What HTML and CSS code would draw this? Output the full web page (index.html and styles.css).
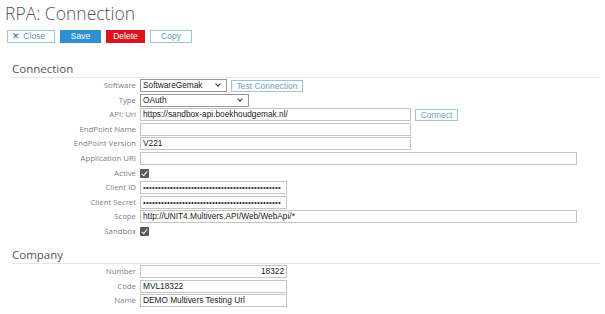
FILE: index.html
```html
<!DOCTYPE html>
<html lang="en">
<head>
  <meta charset="UTF-8">
  <title>RPA: Connection</title>
  <link rel="stylesheet" href="styles.css">
</head>
<body>
  <h1>RPA: Connection</h1>

  <div class="toolbar">
    <button class="btn btn-close"><span class="x">&#x2715;</span> Close</button>
    <button class="btn btn-save">Save</button>
    <button class="btn btn-delete">Delete</button>
    <button class="btn btn-copy">Copy</button>
  </div>

  <div class="section first">
    <h2>Connection</h2>
    <div class="form">
      <label>Software</label>
      <div class="field">
        <div class="select w-sw">SoftwareGemak<span class="caret"></span></div>
        <button class="btn btn-light w-test">Test Connection</button>
      </div>

      <label>Type</label>
      <div class="field"><div class="select w-type">OAuth<span class="caret"></span></div></div>

      <label>API: Uri</label>
      <div class="field">
        <div class="input w-mid">https://sandbox-api.boekhoudgemak.nl/</div>
        <button class="btn btn-light w-conn">Connect</button>
      </div>

      <label>EndPoint Name</label>
      <div class="field"><div class="input w-mid"></div></div>

      <label>EndPoint Version</label>
      <div class="field"><div class="input w-mid">V221</div></div>

      <label>Application URI</label>
      <div class="field"><div class="input w-wide"></div></div>

      <label>Active</label>
      <div class="field"><span class="check"></span></div>

      <label>Client ID</label>
      <div class="field"><div class="input w-short dots">&#8226;&#8226;&#8226;&#8226;&#8226;&#8226;&#8226;&#8226;&#8226;&#8226;&#8226;&#8226;&#8226;&#8226;&#8226;&#8226;&#8226;&#8226;&#8226;&#8226;&#8226;&#8226;&#8226;&#8226;&#8226;&#8226;&#8226;&#8226;&#8226;&#8226;&#8226;&#8226;&#8226;&#8226;&#8226;&#8226;&#8226;&#8226;&#8226;&#8226;&#8226;&#8226;&#8226;&#8226;&#8226;&#8226;</div></div>

      <label>Client Secret</label>
      <div class="field"><div class="input w-short dots">&#8226;&#8226;&#8226;&#8226;&#8226;&#8226;&#8226;&#8226;&#8226;&#8226;&#8226;&#8226;&#8226;&#8226;&#8226;&#8226;&#8226;&#8226;&#8226;&#8226;&#8226;&#8226;&#8226;&#8226;&#8226;&#8226;&#8226;&#8226;&#8226;&#8226;&#8226;&#8226;&#8226;&#8226;&#8226;&#8226;&#8226;&#8226;&#8226;&#8226;&#8226;&#8226;&#8226;&#8226;&#8226;&#8226;</div></div>

      <label>Scope</label>
      <div class="field"><div class="input w-wide">http://UNIT4.Multivers.API/Web/WebApi/*</div></div>

      <label>Sandbox</label>
      <div class="field"><span class="check"></span></div>
    </div>
  </div>

  <div class="section">
    <h2>Company</h2>
    <div class="form">
      <label>Number</label>
      <div class="field"><div class="input w-short num">18322</div></div>

      <label>Code</label>
      <div class="field"><div class="input w-short">MVL18322</div></div>

      <label>Name</label>
      <div class="field"><div class="input w-short">DEMO Multivers Testing Url</div></div>
    </div>
  </div>
</body>
</html>
```

FILE: styles.css
```css
body {
  margin: 0;
  padding: 0 5px;
  font-family: "Open Sans", sans-serif;
  color: #555;
  background: #fff;
}
h1 {
  margin: 0;
  padding-top: 1px;
  font-size: 17.5px;
  font-weight: 300;
  line-height: 24px;
  color: #555;
}

.toolbar {
  display: flex;
  gap: 5px;
  margin-top: 5px;
  padding-left: 2px;
}
.btn {
  box-sizing: border-box;
  height: 13px;
  padding: 0 4px;
  font-family: "Liberation Sans", Arial, sans-serif;
  font-size: 8.5px;
  line-height: 11px;
  border: 1px solid #9cc3d8;
  background: #fff;
  color: #5b95ba;
  cursor: pointer;
}
.btn-close { width: 48px; text-align: left; }
.btn-close .x { font-size: 9px; margin-right: 1px; color: #2d6fa3; }
.btn-save { width: 41px; background: #2f8fd4; border-color: #2f8fd4; color: #fff; }
.btn-delete { width: 39px; background: #d9141e; border-color: #d9141e; color: #fff; }
.btn-copy { width: 42px; }
.w-test { width: 72px; height: 12px; color: #6fa3c6; }
.w-conn { width: 43px; height: 12px; color: #6fa3c6; }

.section {
  margin: 0 0 0 7px;
}
.section.first {
  margin-top: 19px;
}
.section + .section {
  margin-top: 10px;
}
h2 {
  margin: 0;
  font-size: 11.5px;
  font-weight: 400;
  line-height: 14px;
  color: #555;
  border-bottom: 1px solid #e6e6e6;
  padding-bottom: 1px;
}

.form {
  display: grid;
  grid-template-columns: 124px 1fr;
  column-gap: 4px;
  row-gap: 1.6px;
  margin-top: 1px;
}
.form label {
  text-align: right;
  font-size: 7.8px;
  line-height: 13px;
  color: #808080;
}
.field {
  display: flex;
  align-items: center;
  gap: 4px;
  height: 13px;
}
.input, .select {
  box-sizing: border-box;
  height: 13px;
  padding: 0 2px;
  border: 1px solid #c4c4c4;
  font-family: "Liberation Sans", Arial, sans-serif;
  font-size: 8.3px;
  line-height: 11px;
  color: #222;
  white-space: nowrap;
  overflow: hidden;
  position: relative;
}
.select { border-color: #999; }
.caret {
  position: absolute;
  right: 6px;
  top: 2px;
  width: 3px;
  height: 3px;
  border-right: 1.4px solid #333;
  border-bottom: 1.4px solid #333;
  transform: rotate(45deg);
}
.w-sw { width: 87px; }
.w-type { width: 109px; }
.w-mid { width: 271px; }
.w-wide { width: 437px; }
.w-short { width: 147px; }
.dots { font-size: 8px; letter-spacing: 0.2px; color: #333; }
.num { text-align: right; }

.check {
  display: inline-block;
  width: 9px;
  height: 9px;
  background: #5a5a5a;
  border-radius: 1px;
  position: relative;
}
.check::after {
  content: "";
  position: absolute;
  left: 3px;
  top: 1px;
  width: 2px;
  height: 5px;
  border-right: 1.4px solid #fff;
  border-bottom: 1.4px solid #fff;
  transform: rotate(40deg);
}
```
